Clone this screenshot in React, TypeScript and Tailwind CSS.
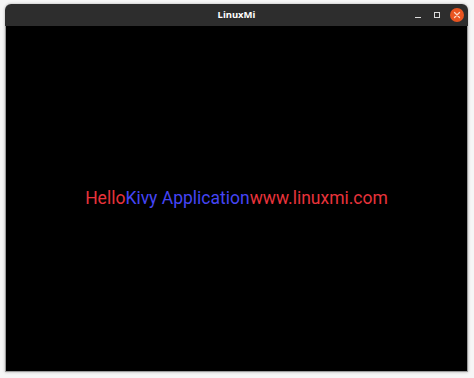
import React from "react";

export default function App() {
  return (
    <div className="w-[474px] h-[378px] bg-[#f6f6f6] pt-[4px] pl-[5px] overflow-hidden">
      <div className="w-[463px] h-[368px] flex flex-col rounded-t-[6px] overflow-hidden shadow-[0_0_3px_rgba(0,0,0,0.3)]">
        <div className="h-[22px] bg-[#2d2d2d] flex items-center relative shrink-0">
          <div className="flex-1 text-center text-white text-[9.5px] font-bold font-['Noto_Sans',sans-serif] leading-none">
            LinuxMi
          </div>
          <div className="absolute right-[4px] top-0 h-[22px] flex items-center">
            <div className="w-[6px] h-[1px] bg-[#dcdcdc] mt-[5px]" />
            <div className="w-[6px] h-[6px] border border-[#dcdcdc] ml-[13px]" />
            <div className="w-[14px] h-[14px] rounded-full bg-[#e95420] flex items-center justify-center ml-[10px]">
              <svg width="8" height="8" viewBox="0 0 8 8">
                <path d="M1.5 1.5 L6.5 6.5 M6.5 1.5 L1.5 6.5" stroke="#fbd7c6" strokeWidth="1.3" strokeLinecap="round" />
              </svg>
            </div>
          </div>
        </div>
        <div className="flex-1 bg-black border border-t-0 border-[#9a9a9a] flex items-center justify-center">
          <div className="font-['Roboto',sans-serif] text-[17.5px] leading-none whitespace-nowrap">
            <span className="text-[#e8333b]">Hello</span>
            <span className="text-[#4545f5]">Kivy Application</span>
            <span className="text-[#e8333b]">www.linuxmi.com</span>
          </div>
        </div>
      </div>
    </div>
  );
}
